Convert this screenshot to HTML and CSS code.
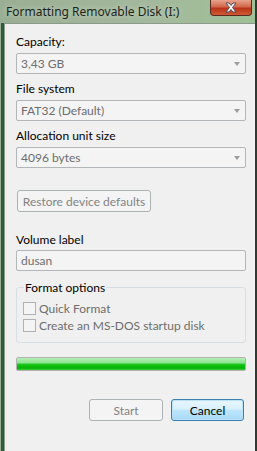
FILE: index.html
```html
<!DOCTYPE html>
<html lang="en">
<head>
    <link rel="stylesheet" href="styles.css">
    <meta charset="utf-8" />
    <title>Formatting Removable Disk (I:)</title>
</head>
<body>

<div class="window">
    <!-- Title bar with the red close button -->
    <div class="titlebar">
        <span class="title">Formatting Removable Disk (I:)</span>
        <div class="close">
            <svg width="14" height="11" viewBox="0 0 14 11">
                <path d="M2 1 L5 1 L7 3.5 L9 1 L12 1 L8.5 5.5 L12 10 L9 10 L7 7.5 L5 10 L2 10 L5.5 5.5 Z" fill="#fff" stroke="#4a4a5a" stroke-width="1"/>
            </svg>
        </div>
    </div>

    <div class="client">
        <div class="label">Capacity:</div>
        <div class="combo">3,43 GB<span class="arrow"></span></div>

        <div class="label">File system</div>
        <div class="combo">FAT32 (Default)<span class="arrow"></span></div>

        <div class="label">Allocation unit size</div>
        <div class="combo">4096 bytes<span class="arrow"></span></div>

        <button class="btn restore" disabled>Restore device defaults</button>

        <div class="label volume">Volume label</div>
        <div class="textbox">dusan</div>

        <!-- Format options group -->
        <fieldset class="group">
            <legend>Format options</legend>
            <div class="check"><span class="box"></span>Quick Format</div>
            <div class="check"><span class="box"></span>Create an MS-DOS startup disk</div>
        </fieldset>

        <div class="progress"><div class="fill"></div></div>

        <div class="actions">
            <button class="btn start" disabled>Start</button>
            <button class="btn cancel">Cancel</button>
        </div>
    </div>
</div>

</body>
</html>
```

FILE: styles.css
```css
html, body {
    margin: 0;
    padding: 0;
}

body {
    width: 257px;
    height: 451px;
    overflow: hidden;
    font-family: Lato, "Noto Sans", sans-serif;
    font-size: 12px;
    line-height: 15px;
}

.window {
    display: flex;
    flex-direction: column;
    height: 451px;
    background: linear-gradient(90deg, #9aae94 0%, #a3b89c 60%, #9fc096 100%);
    border-right: 2px solid #2c3d30;
    box-sizing: border-box;
}

.titlebar {
    display: flex;
    justify-content: space-between;
    align-items: flex-start;
    height: 23px;
    padding-left: 6px;
    padding-right: 3px;
}

.title {
    margin-top: 4px;
    font-family: "Noto Sans", sans-serif;
    color: #1c1f1c;
    text-shadow: 0 0 6px rgba(220, 235, 215, 0.9);
    white-space: nowrap;
}

.close {
    display: flex;
    align-items: center;
    justify-content: center;
    width: 42px;
    height: 16px;
    background: linear-gradient(#e8a38e 0%, #d2684b 45%, #b9341a 55%, #cf5a33 100%);
    border: 1px solid #5a2a22;
    border-top: none;
    border-radius: 0 0 4px 4px;
    box-sizing: border-box;
}

.client {
    flex: 1;
    margin-left: 4px;
    background: #f0f0f0;
    border-left: 1px solid #8c9a89;
    border-top: 1px solid #8c9a89;
    box-shadow: -3px 0 0 #2f5a3e;
    padding: 10px 9px 0 11px;
    display: flex;
    flex-direction: column;
}

.label {
    color: #000;
    margin-bottom: 4px;
}

.combo, .textbox {
    position: relative;
    height: 21px;
    box-sizing: border-box;
    border: 1px solid #b2b6b8;
    border-radius: 2px;
    background: #f4f4f4;
    color: #6d6d6d;
    padding: 2px 4px;
    margin-bottom: 7px;
}

.arrow {
    position: absolute;
    right: 5px;
    top: 8px;
    width: 0;
    height: 0;
    border-left: 3.5px solid transparent;
    border-right: 3.5px solid transparent;
    border-top: 4px solid #9d9d9d;
}

.btn {
    font-family: inherit;
    font-size: 12px;
    line-height: 15px;
    height: 22px;
    box-sizing: border-box;
    border-radius: 3px;
    padding: 0;
}

.btn[disabled] {
    background: #f4f4f4;
    border: 1px solid #adb2b5;
    color: #838383;
}

.restore {
    align-self: flex-start;
    width: 134px;
    margin: 15px 0 0 1px;
}

.volume {
    margin-top: 20px;
    margin-bottom: 3px;
}

.textbox {
    margin-bottom: 0;
}

.group {
    margin: 9px 0 0 0;
    padding: 5px 0 8px 6px;
    border: 1px solid #d5dfe5;
    border-radius: 3px;
}

.group legend {
    padding: 0 1px;
    margin-left: 1px;
    color: #000;
}

.check {
    display: flex;
    align-items: center;
    color: #6d6d6d;
    height: 17px;
}

.box {
    width: 13px;
    height: 13px;
    box-sizing: border-box;
    border: 1px solid #b1b1b1;
    background: #f4f4f4;
    margin-right: 3px;
}

.progress {
    margin-top: 14px;
    height: 14px;
    border: 1px solid #b2b2b2;
    border-radius: 2px;
    background: #e6e6e6;
    box-sizing: border-box;
}

.fill {
    height: 100%;
    background: linear-gradient(#b6f0b6 0%, #8ee48e 40%, #14c414 55%, #06b206 85%, #3fd03f 100%);
}

.actions {
    display: flex;
    justify-content: flex-end;
    gap: 8px;
    margin-top: 28px;
    margin-right: 2px;
}

.start {
    width: 74px;
}

.cancel {
    width: 73px;
    color: #000;
    border: 1px solid #3c7fb1;
    background: linear-gradient(#eaf6fd 0%, #d9f0fc 45%, #bee6fd 50%, #a7d9f5 100%);
    box-shadow: inset 0 0 0 1px #b8e2f9;
}
```
